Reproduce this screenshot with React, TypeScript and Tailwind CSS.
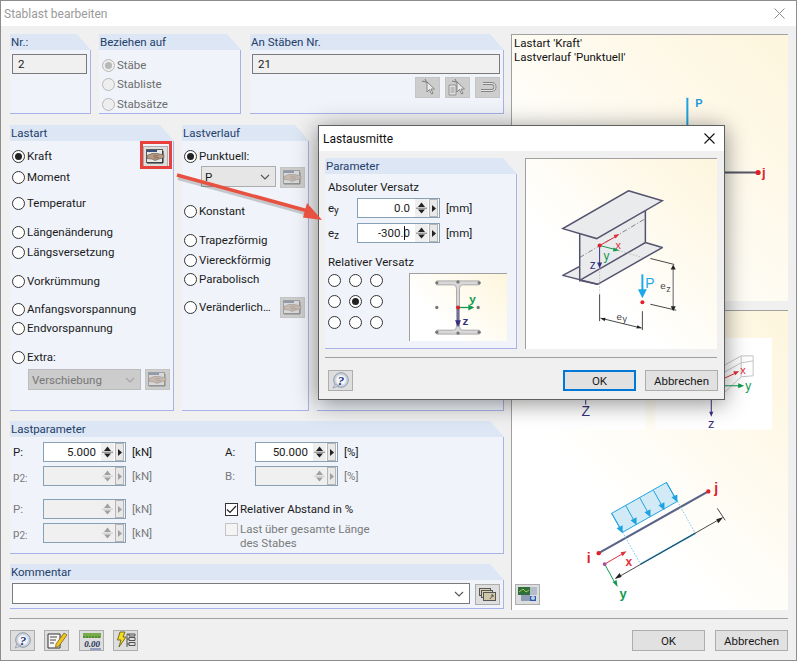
import React from "react";

type P = { children?: React.ReactNode; className?: string };

function Group({ title, className = "", children, titleClass = "" }: P & { title: string; titleClass?: string }) {
  return (
    <div className={`flex flex-col ${className}`}>
      <div className={`h-[16px] shrink-0 bg-[#dce6f4] pl-[1px] leading-[17px] text-[#23406b] [clip-path:polygon(0_0,calc(100%-14px)_0,100%_100%,0_100%)] ${titleClass}`}>
        {title}
      </div>
      <div className="flex min-h-0 flex-1 flex-col border-b border-r border-[#a8b2e8] bg-[#f0f4fa]">{children}</div>
    </div>
  );
}

function Radio({ checked = false, disabled = false, className = "" }: { checked?: boolean; disabled?: boolean; className?: string }) {
  return (
    <span className={`flex h-[13px] w-[13px] shrink-0 items-center justify-center rounded-full border ${disabled ? "border-[#b8b8b8] bg-[#eeeeee]" : "border-[#333333] bg-white"} ${className}`}>
      {checked && <span className={`h-[7px] w-[7px] rounded-full ${disabled ? "bg-[#b8b8b8]" : "bg-[#222222]"}`} />}
    </span>
  );
}

function RadioRow({ label, checked, disabled, className = "" }: { label: string; checked?: boolean; disabled?: boolean; className?: string }) {
  return (
    <div className={`flex h-[18px] items-center ${disabled ? "text-[#6d6d6d]" : "text-[#1a1a1a]"} ${className}`}>
      <Radio checked={checked} disabled={disabled} />
      <span className="ml-[2px] whitespace-nowrap">{label}</span>
    </div>
  );
}

function Btn({ children, className = "", dim = false }: P & { dim?: boolean }) {
  return (
    <div className={`flex h-[21px] w-[25px] shrink-0 items-center justify-center border ${dim ? "border-[#c4c4c4] bg-[#cdcdcd]" : "border-[#adadad] bg-[#dedede]"} ${className}`}>
      {children}
    </div>
  );
}

function HandIcon({ dim = false }: { dim?: boolean }) {
  return (
    <svg width="19" height="15" viewBox="0 0 19 15" className={dim ? "opacity-40" : ""}>
      <rect x="0.5" y="0.5" width="16" height="13" fill="#e9e9e9" stroke="#5a5a5a" />
      <path d="M1 14 H17 V2" fill="none" stroke="#222222" strokeWidth="1" />
      <rect x="1" y="1" width="10" height="2" fill="#35527f" />
      <path d="M1 6.5 L6 4.5 L11 4.5 L18 6 L18 8.5 L13 10 L9 11.5 L6 10 L1 9.5 Z" fill="#b89a84" stroke="#5e4a3e" strokeWidth="0.6" />
      <path d="M7 7 L12 6.5 M8 9 L13 8.5" stroke="#5e4a3e" strokeWidth="0.6" />
    </svg>
  );
}

function Chevron({ color = "#555555" }: { color?: string }) {
  return (
    <svg width="10" height="6" viewBox="0 0 10 6">
      <path d="M1 1 L5 5 L9 1" fill="none" stroke={color} strokeWidth="1.1" />
    </svg>
  );
}

function Select({ value, className = "", disabled = false }: { value: string; className?: string; disabled?: boolean }) {
  return (
    <div className={`flex h-[21px] items-center justify-between border pl-[3px] pr-[5px] ${disabled ? "border-[#bcbcbc] bg-[#cccccc] text-[#777777]" : "border-[#adadad] bg-[#e6e6e6] text-[#1a1a1a]"} ${className}`}>
      <span>{value}</span>
      <Chevron color={disabled ? "#a5a5a5" : "#555555"} />
    </div>
  );
}

function Spin({ value, disabled = false, className = "" }: { value?: React.ReactNode; disabled?: boolean; className?: string }) {
  const col = disabled ? "#a0a0a0" : "#222222";
  return (
    <div className={`flex h-[20px] w-[83px] shrink-0 items-center border border-[#86a0b8] ${disabled ? "bg-[#f0f0f0]" : "bg-white"} ${className}`}>
      <div className="flex-1 pr-[5px] text-right text-[#1a1a1a]">{value}</div>
      <svg width="13" height="18" viewBox="0 0 13 18" className="shrink-0">
        <rect width="13" height="18" fill="#efefef" />
        <path d="M6.5 3.5 L10 8 L3 8 Z" fill={col} />
        <path d="M6.5 14.5 L10 10.5 L3 10.5 Z" fill={col} />
        <path d="M1 9.2 H12" stroke={disabled ? "#c8c8c8" : "#777777"} />
      </svg>
      <div className="ml-[1px] mr-[1px] flex h-[18px] w-[9px] shrink-0 items-center justify-center border border-[#b5b5b5] bg-[#e8e8e8]">
        <svg width="4" height="7" viewBox="0 0 4 7"><path d="M0 0 L4 3.5 L0 7 Z" fill={col} /></svg>
      </div>
    </div>
  );
}

function FieldRow({ label, value, unit, disabled = false, labelClass = "", className = "" }: { label: React.ReactNode; value?: string; unit: string; disabled?: boolean; labelClass?: string; className?: string }) {
  return (
    <div className={`flex h-[20px] items-center ${className}`}>
      <span className={`w-[30px] shrink-0 ${disabled ? "text-[#7a7a7a]" : "text-[#1a1a1a]"} ${labelClass}`}>{label}</span>
      <Spin value={value} disabled={disabled} />
      <span className={`ml-[6px] ${disabled ? "text-[#7a7a7a]" : "text-[#1a1a1a]"}`}>{unit}</span>
    </div>
  );
}

function Sub({ a, b }: { a: string; b: string }) {
  return (
    <span>
      {a}
      <span className="relative top-[2px] text-[10px]">{b}</span>
    </span>
  );
}

function HelpIcon() {
  return (
    <svg width="19" height="17" viewBox="0 0 19 17">
      <circle cx="10" cy="8" r="7.3" fill="#d0d5e0" stroke="#8f98aa" />
      <path d="M4 12 L2 16 L8 14 Z" fill="#d0d5e0" stroke="#8f98aa" strokeWidth="0.7" />
      <circle cx="10" cy="8" r="4.8" fill="#f4f6fa" />
      <text x="10" y="12.5" textAnchor="middle" fontSize="13" fontWeight="700" fontStyle="italic" fill="#24407c" fontFamily="Liberation Serif">?</text>
    </svg>
  );
}

function NoteIcon() {
  return (
    <svg width="20" height="19" viewBox="0 0 20 19">
      <path d="M1 3 H13 V17 H1 Z" fill="#f7f7f7" stroke="#333333" />
      <path d="M3 6 H10 M3 9 H9 M3 12 H7" stroke="#444444" />
      <path d="M9 13 L17 2 L20 4 L12 15 L8.5 16.5 Z" fill="#f2c51e" stroke="#6a5510" strokeWidth="0.7" />
    </svg>
  );
}

function ValueIcon() {
  return (
    <svg width="20" height="18" viewBox="0 0 20 18">
      <rect x="1" y="1" width="18" height="5" fill="#74ad4a" />
      <path d="M2 4 V6 M5 4 V6 M8 4 V6 M11 4 V6 M14 4 V6 M17 4 V6" stroke="#3e6d22" />
      <text x="10" y="15" textAnchor="middle" fontSize="9" fontWeight="700" fontStyle="italic" fill="#222f55" fontFamily="Liberation Serif">0.00</text>
      <path d="M8 17 H19" stroke="#4a5fa5" />
    </svg>
  );
}

function BoltIcon() {
  return (
    <svg width="20" height="19" viewBox="0 0 20 19">
      <path d="M4 1 H9 L7 6 H10 L3 16 L5 9 H1.5 Z" fill="#f4dc1e" stroke="#5c5410" strokeWidth="0.8" />
      <path d="M11 3 V16 M11 3 H19 M13 3 V5 H19 V3 M11 8 H13 V6.5 H19 V9.5 H13 V8 M11 13 H13 V11.5 H19 V14.5 H13 V13" fill="none" stroke="#444444" strokeWidth="0.9" />
    </svg>
  );
}

function PickIcon({ doc = false, back = false }: { doc?: boolean; back?: boolean }) {
  if (back) {
    return (
      <svg width="19" height="13" viewBox="0 0 19 13" className="opacity-60">
        <path d="M5 2.5 H13.5 A3.5 3.5 0 0 1 13.5 9.5 H3" fill="none" stroke="#555555" strokeWidth="3" />
        <path d="M5 2.5 H13.5 A3.5 3.5 0 0 1 13.5 9.5 H3" fill="none" stroke="#f4f4f4" strokeWidth="1.2" />
      </svg>
    );
  }
  return (
    <svg width="20" height="17" viewBox="0 0 20 17" className="opacity-60">
      {doc && <path d="M1 6 H8 V16 H1 Z M2.5 9 H6.5 M2.5 11 H6.5 M2.5 13 H6.5" fill="#eeeeee" stroke="#555555" strokeWidth="0.8" />}
      <path d="M7 0 L9 4 M4 2 L8 3" stroke="#444444" />
      <path d="M9 3 L9 13 L11.5 10.5 L13.5 15 L15 14.3 L13 10 L16.5 10 Z" fill="#ffffff" stroke="#333333" strokeWidth="0.8" />
    </svg>
  );
}

function StackIcon() {
  return (
    <svg width="17" height="13" viewBox="0 0 17 13">
      <rect x="0.5" y="0.5" width="11" height="7" fill="#d9d1b4" stroke="#555555" />
      <rect x="2.5" y="2.5" width="11" height="7" fill="#d9d1b4" stroke="#555555" />
      <rect x="4.5" y="4.5" width="12" height="8" fill="#cfc7a6" stroke="#555555" />
      <path d="M11 11 L14 7 M14 7 H12 M14 7 V9" stroke="#555555" />
    </svg>
  );
}

function ViewIcon() {
  return (
    <svg width="20" height="17" viewBox="0 0 20 17">
      <rect x="0" y="1" width="12" height="8" fill="#2f6d3a" />
      <path d="M1 6 L5 3 L8 6 L11 4" fill="none" stroke="#9ad04a" />
      <rect x="12" y="1" width="7" height="8" fill="#b5bcc9" />
      <rect x="3" y="9" width="9" height="6" fill="#8f9bb4" />
      <path d="M12 10 H18 V15 H12 Z" fill="#2b5aa8" />
      <circle cx="15" cy="12" r="2" fill="#bcd0ee" />
    </svg>
  );
}

function BeamPicture() {
  const dark = "#55526f";
  return (
    <svg viewBox="0 0 192 191" className="absolute inset-0 h-full w-full">
      <path d="M54 75 L120 52 V84 L54 122 Z" fill="#e9ebec" stroke={dark} strokeWidth="1.5" />
      <path d="M120 84 L137 89 L72 126 L37 117 L54 108" fill="#e9ebec" stroke={dark} strokeWidth="1.5" strokeLinejoin="round" />
      <path d="M54 108 V122 L72 126 M54 122 L120 84" fill="none" stroke={dark} strokeWidth="1.5" />
      <path d="M103 32 L137 42 L71 80 L37 70 Z" fill="#e9ebec" stroke={dark} strokeWidth="1.5" />
      <path d="M54 99 L120 60" stroke="#555555" strokeWidth="0.7" strokeDasharray="5 2 1 2" />
      <path d="M74 110 V135 M93 92 L117 99" stroke="#aaaaaa" strokeWidth="0.7" strokeDasharray="1.5 1.5" />
      <path d="M74 87 L92 77" stroke="#e0303a" />
      <path d="M94 75.5 L88 76.5 L90 80 Z" fill="#e0303a" />
      <path d="M74 87 L90 91" stroke="#1a9a50" />
      <path d="M94 92 L88 89 L87.5 93 Z" fill="#1a9a50" />
      <path d="M74 87 V105" stroke="#35307e" />
      <path d="M74 110 L71.5 104 H76.5 Z" fill="#35307e" />
      <circle cx="74" cy="87" r="2" fill="#e0202a" />
      <text x="90" y="90" fontSize="11" fill="#e0303a" fontFamily="Liberation Sans">x</text>
      <text x="78" y="102" fontSize="12" fill="#1a9a50" fontFamily="Liberation Sans">y</text>
      <text x="64" y="111" fontSize="12" fill="#35307e" fontFamily="Liberation Sans">z</text>
      <path d="M74 136 V163 M117 153 V172 M75 160 L116 170" stroke="#333333" strokeWidth="0.9" />
      <path d="M75 160 L80 159.5 L79 163 Z M116.5 170 L111 170.5 L112 167 Z" fill="#222222" />
      <text x="91" y="162" fontSize="10" fill="#444444" fontFamily="Liberation Sans">e</text>
      <text x="97" y="164" fontSize="9" fill="#444444" fontFamily="Liberation Sans">y</text>
      <path d="M117 116 V134" stroke="#1ea8ea" strokeWidth="2" />
      <path d="M112.5 131 H121.5 L117 140 Z" fill="#1ea8ea" />
      <circle cx="117" cy="144" r="2" fill="#e0202a" />
      <text x="120" y="130" fontSize="14" fill="#1ea8ea" fontFamily="Liberation Sans">P</text>
      <path d="M125 100 L149 106 M125 146 L151 152" stroke="#333333" strokeWidth="0.9" />
      <path d="M148 108 V150" stroke="#999999" strokeWidth="1.6" />
      <path d="M148 106 L145.5 111 H150.5 Z M148 153 L145.5 148 H150.5 Z" fill="#222222" />
      <text x="135" y="131" fontSize="10" fill="#444444" fontFamily="Liberation Sans">e</text>
      <text x="141" y="134" fontSize="9" fill="#444444" fontFamily="Liberation Sans">z</text>
    </svg>
  );
}

function SmallSection() {
  const g = "#a9a9a9";
  return (
    <svg viewBox="0 0 98 68" className="absolute inset-0 h-full w-full">
      <path d="M27 7 H70 V11 H53 Q50 11 50 15 V53 Q50 57 53 57 H70 V61 H27 V57 H44 Q47 57 47 53 V15 Q47 11 44 11 H27 Z" fill="#d8d8d8" stroke={g} strokeWidth="1" />
      <g fill="#777777">
        <circle cx="27" cy="9" r="1.7" /><circle cx="48.5" cy="8" r="1.7" /><circle cx="70" cy="9" r="1.7" />
        <circle cx="27" cy="34" r="1.7" /><circle cx="69" cy="34" r="1.7" />
        <circle cx="27" cy="59" r="1.7" /><circle cx="48.5" cy="60" r="1.7" /><circle cx="70" cy="59" r="1.7" />
      </g>
      <path d="M49 34 H60" stroke="#109a50" strokeWidth="1.3" />
      <path d="M65 34 L59 31 V37 Z" fill="#109a50" />
      <path d="M48.5 34 V49" stroke="#35307e" strokeWidth="1.3" />
      <path d="M48.5 54 L45.5 47 H51.5 Z" fill="#35307e" />
      <circle cx="48.5" cy="34" r="2" fill="#e0202a" />
      <text x="60" y="29" fontSize="12" fontWeight="700" fill="#109a50" fontFamily="Liberation Sans">y</text>
      <text x="53" y="52" fontSize="12" fontWeight="700" fill="#35307e" fontFamily="Liberation Sans">z</text>
    </svg>
  );
}

function UpperPicture() {
  return (
    <svg viewBox="0 0 277 267" className="absolute inset-0 h-full w-full">
      <path d="M100 138 H247" stroke="#555566" strokeWidth="2" />
      <path d="M176 63 V138" stroke="#1ea3e0" strokeWidth="2" />
      <circle cx="247" cy="138" r="2.6" fill="#e0202a" />
      <text x="184" y="72" fontSize="11" fontWeight="700" fill="#1e9bd8" fontFamily="Liberation Sans">P</text>
      <text x="251" y="143" fontSize="13" fontWeight="700" fill="#e0202a" fontFamily="Liberation Sans">j</text>
    </svg>
  );
}

function LowerPicture() {
  const blue = "#1ea3e0";
  const arrows: [number, number][] = [[100, 203], [114, 195], [128, 187], [142, 180], [155, 172]];
  return (
    <svg viewBox="0 0 277 300" className="absolute inset-0 h-full w-full">
      <rect x="17" y="27" width="117" height="92" fill="#ffffff" />
      <rect x="144" y="27" width="117" height="92" fill="#ffffff" />
      <path d="M74 85 V94" stroke="#35307e" />
      <text x="74" y="105" textAnchor="middle" fontSize="14" fill="#35307e" fontFamily="Liberation Sans">Z</text>
      <path d="M200 88 V103" stroke="#35307e" />
      <path d="M200 106 L198 101 H202 Z" fill="#35307e" />
      <text x="200" y="117" textAnchor="middle" fontSize="13" fill="#35307e" fontFamily="Liberation Sans">z</text>
      <path d="M212 55 L230 45 H242 V65 L230 66 L212 83 M230 45 V66 M212 62 L230 52 L242 50" fill="none" stroke="#c4c4c4" />
      <path d="M212 68 L225 62" stroke="#e0303a" />
      <path d="M228 60.5 L222 60.5 L224 64.5 Z" fill="#e0303a" />
      <path d="M212 75 L230 75" stroke="#109a50" />
      <path d="M233 75 L227 72.5 V77.5 Z" fill="#109a50" />
      <text x="229" y="63" fontSize="11" fill="#e0303a" fontFamily="Liberation Sans">x</text>
      <text x="234" y="79" fontSize="12" fill="#109a50" fontFamily="Liberation Sans">y</text>

      <path d="M100 203 L155 172 L166 191 L111 222 Z" fill="#d2eaf6" stroke={blue} strokeWidth="1" />
      {arrows.map(([x, y], i) => (
        <g key={i}>
          <path d={`M${x} ${y} L${x + 10} ${y + 18}`} stroke={blue} />
          <path d={`M${x + 11} ${y + 20} L${x + 5} ${y + 15} L${x + 11} ${y + 12} Z`} fill={blue} />
        </g>
      ))}
      <path d="M87 243 L197 181" stroke="#5a6488" strokeWidth="2.2" />
      <circle cx="87" cy="243" r="2.2" fill="#e0202a" />
      <circle cx="197" cy="181" r="2.2" fill="#e0202a" />
      <text x="75" y="253" fontSize="14" fontWeight="700" fill="#e0202a" fontFamily="Liberation Sans">i</text>
      <text x="203" y="183" fontSize="14" fontWeight="700" fill="#e0202a" fontFamily="Liberation Sans">j</text>
      <path d="M111 222 L129 254 M166 191 L184 223" stroke="#5ab8e6" strokeWidth="0.8" strokeDasharray="1.5 1.5" />
      <path d="M129 254 L184 223" stroke={blue} strokeWidth="1.6" />
      <path d="M105 268 L210 208 M206 198 L214 210" stroke="#333333" strokeWidth="0.9" />
      <path d="M103 269 L108 263 L110 267 Z M212 207 L207 213 L205 209 Z" fill="#222222" />
      <path d="M93 254 L112 243" stroke="#e0303a" />
      <path d="M115 241 L109 242 L111 246 Z" fill="#e0303a" />
      <path d="M93 254 L104 274" stroke="#109a50" />
      <path d="M106 277 L101 272 L105 270 Z" fill="#109a50" />
      <circle cx="93" cy="254" r="2" fill="#b04a9a" />
      <text x="114" y="256" fontSize="12" fontWeight="700" fill="#e0303a" fontFamily="Liberation Sans">x</text>
      <text x="108" y="288" fontSize="13" fontWeight="700" fill="#109a50" fontFamily="Liberation Sans">y</text>
    </svg>
  );
}

function Dialog() {
  return (
    <div className="absolute left-[317px] top-[124px] z-10 flex h-[275px] w-[407px] flex-col border border-[#5f5f5f] bg-[#f0f0f0] shadow-[0_3px_22px_rgba(0,0,0,0.45)]">
      <div className="flex h-[25px] shrink-0 items-center justify-between bg-white pl-[4px] pr-[9px] text-[12px] text-[#111111]">
        <span>Lastausmitte</span>
        <svg width="11" height="11" viewBox="0 0 11 11"><path d="M0.5 0.5 L10.5 10.5 M10.5 0.5 L0.5 10.5" stroke="#111111" strokeWidth="1.1" /></svg>
      </div>
      <div className="ml-[6px] mt-[7px] flex h-[191px] shrink-0 gap-[8px]">
        <Group title="Parameter" className="h-full w-[192px]">
          <div className="ml-[3px] mt-[5px] h-[16px] leading-[16px] text-[#1a1a1a]">Absoluter Versatz</div>
          <div className="ml-[3px] mt-[3px] flex h-[20px] items-center">
            <span className="w-[29px] text-[#1a1a1a]"><Sub a="e" b="y" /></span>
            <Spin value="0.0" />
            <span className="ml-[6px] text-[#1a1a1a]">[mm]</span>
          </div>
          <div className="ml-[3px] mt-[5px] flex h-[20px] items-center">
            <span className="w-[29px] text-[#1a1a1a]"><Sub a="e" b="z" /></span>
            <div className="relative">
              <Spin value="-300.0" />
              <span className="absolute left-[47px] top-[3px] h-[14px] w-[1px] bg-[#111111]" />
            </div>
            <span className="ml-[6px] text-[#1a1a1a]">[mm]</span>
          </div>
          <div className="ml-[3px] mt-[11px] h-[16px] leading-[16px] text-[#1a1a1a]">Relativer Versatz</div>
          <div className="ml-[3px] mt-[3px] flex">
            <div className="grid grid-cols-[13px_13px_13px] content-start gap-x-[8px] gap-y-[8px] pt-[1px]">
              <Radio /><Radio /><Radio />
              <Radio /><Radio checked /><Radio />
              <Radio /><Radio /><Radio />
            </div>
            <div className="relative ml-[26px] h-[68px] w-[98px] border-l border-t border-[#a0a0a0] bg-[linear-gradient(45deg,#ffffff_30%,#fdf5dc)]">
              <SmallSection />
            </div>
          </div>
        </Group>
        <div className="relative h-full w-[192px] border-l border-t border-[#a0a0a0] bg-[linear-gradient(45deg,#ffffff_35%,#fdf5dc)]">
          <BeamPicture />
        </div>
      </div>
      <div className="ml-[6px] mt-[8px] w-[392px] border-t border-[#a0a0a0]" />
      <div className="mt-[12px] flex items-center justify-between pl-[9px] pr-[6px]">
        <Btn className="h-[20px]"><HelpIcon /></Btn>
        <div className="flex gap-[9px] text-[#1a1a1a]">
          <div className="flex h-[21px] w-[73px] items-center justify-center border-2 border-[#0078d7] bg-[#e1e1e1]">OK</div>
          <div className="flex h-[21px] w-[73px] items-center justify-center border border-[#adadad] bg-[#e1e1e1]">Abbrechen</div>
        </div>
      </div>
    </div>
  );
}

export default function App() {
  return (
    <div className="relative flex h-[661px] w-[797px] flex-col overflow-hidden border border-[#8d8d8d] bg-[#f0f0f0] font-['Roboto','Liberation_Sans',sans-serif] text-[11.5px] leading-[16px]">
      <div className="flex h-[25px] shrink-0 items-center justify-between bg-white pl-[3px] pr-[11px]">
        <span className="text-[12px] text-[#9a9a9a]">Stablast bearbeiten</span>
        <svg width="11" height="11" viewBox="0 0 11 11"><path d="M0.5 0.5 L10.5 10.5 M10.5 0.5 L0.5 10.5" stroke="#8a8a8a" strokeWidth="1" /></svg>
      </div>

      <div className="flex shrink-0 gap-[7px] pl-[9px] pt-[8px]">
        <div className="flex w-[494px] flex-col">
          <div className="flex h-[80px] gap-[8px]">
            <Group title="Nr.:" className="w-[81px]">
              <div className="ml-[2px] mt-[4px] flex h-[20px] w-[75px] items-center border border-[#7a7a7a] bg-[#f0f0f0] pl-[5px] text-[#1a1a1a]">2</div>
            </Group>
            <Group title="Beziehen auf" className="w-[142px]">
              <RadioRow label="Stäbe" checked disabled className="ml-[3px] mt-[6px]" />
              <RadioRow label="Stabliste" disabled className="ml-[3px] mt-[1px]" />
              <RadioRow label="Stabsätze" disabled className="ml-[3px] mt-[2px]" />
            </Group>
            <Group title="An Stäben Nr." className="ml-[1px] w-[254px]">
              <div className="ml-[2px] mt-[4px] flex h-[20px] w-[248px] items-center border border-[#7a7a7a] bg-[#f0f0f0] pl-[5px] text-[#1a1a1a]">21</div>
              <div className="mr-[3px] mt-[3px] flex justify-end gap-[5px]">
                <Btn dim><PickIcon /></Btn>
                <Btn dim><PickIcon doc /></Btn>
                <Btn dim><PickIcon back /></Btn>
              </div>
            </Group>
          </div>

          <div className="mt-[11px] flex h-[286px] gap-[8px]">
            <Group title="Lastart" className="w-[164px]">
              <div className="relative ml-[2px] mr-[5px] mt-[6px] flex h-[18px] items-center justify-between">
                <div className="flex items-center text-[#1a1a1a]">
                  <Radio checked />
                  <span className="ml-[2px]">Kraft</span>
                </div>
                <Btn className="h-[19px] w-[23px]"><HandIcon /></Btn>
                <div className="absolute right-[-4px] top-[-6px] h-[28px] w-[32px] border-[3px] border-[#e8403a]" />
              </div>
              <RadioRow label="Moment" className="ml-[2px] mt-[3px]" />
              <RadioRow label="Temperatur" className="ml-[2px] mt-[8px]" />
              <RadioRow label="Längenänderung" className="ml-[2px] mt-[11px]" />
              <RadioRow label="Längsversetzung" className="ml-[2px] mt-[2px]" />
              <RadioRow label="Vorkrümmung" className="ml-[2px] mt-[11px]" />
              <RadioRow label="Anfangsvorspannung" className="ml-[2px] mt-[10px]" />
              <RadioRow label="Endvorspannung" className="ml-[2px] mt-[1px]" />
              <RadioRow label="Extra:" className="ml-[2px] mt-[11px]" />
              <div className="ml-[18px] mt-[3px] flex items-start gap-[4px]">
                <Select value="Verschiebung" disabled className="w-[113px]" />
                <Btn dim><HandIcon dim /></Btn>
              </div>
            </Group>
            <Group title="Lastverlauf" className="w-[127px]">
              <RadioRow label="Punktuell:" checked className="ml-[2px] mt-[6px]" />
              <div className="ml-[19px] mt-[1px] flex items-start gap-[4px]">
                <Select value="P" className="w-[75px]" />
                <Btn dim className="mt-[1px]"><HandIcon dim /></Btn>
              </div>
              <RadioRow label="Konstant" className="ml-[2px] mt-[14px]" />
              <RadioRow label="Trapezförmig" className="ml-[2px] mt-[11px]" />
              <RadioRow label="Viereckförmig" className="ml-[2px] mt-[2px]" />
              <RadioRow label="Parabolisch" className="ml-[2px] mt-[1px]" />
              <div className="ml-[2px] mr-[3px] mt-[10px] flex h-[18px] items-center justify-between text-[#1a1a1a]">
                <div className="flex items-center">
                  <Radio />
                  <span className="ml-[2px]">Veränderlich…</span>
                </div>
                <Btn dim><HandIcon dim /></Btn>
              </div>
            </Group>
            <Group title="" className="w-[187px]" />
          </div>

          <Group title="Lastparameter" className="mt-[10px] h-[133px]">
            <div className="flex">
              <div className="w-[215px] pl-[3px]">
                <FieldRow label="P:" value="5.000" unit="[kN]" className="mt-[5px]" />
                <FieldRow label={<Sub a="p" b="2:" />} unit="[kN]" disabled className="mt-[4px]" />
                <FieldRow label="P:" unit="[kN]" disabled className="mt-[13px]" />
                <FieldRow label={<Sub a="p" b="2:" />} unit="[kN]" disabled className="mt-[4px]" />
              </div>
              <div className="flex-1">
                <FieldRow label="A:" value="50.000" unit="[%]" className="mt-[5px]" />
                <FieldRow label="B:" unit="[%]" disabled className="mt-[4px]" />
                <div className="mt-[13px] flex h-[20px] items-center text-[#1a1a1a]">
                  <span className="flex h-[13px] w-[13px] items-center justify-center border border-[#333333] bg-white">
                    <svg width="11" height="9" viewBox="0 0 11 9"><path d="M1 4.5 L4 7.5 L10 1" fill="none" stroke="#222222" strokeWidth="1.2" /></svg>
                  </span>
                  <span className="ml-[2px]">Relativer Abstand in %</span>
                </div>
                <div className="mt-[4px] flex items-start text-[#7a7a7a]">
                  <span className="h-[13px] w-[13px] shrink-0 border border-[#c4c4c4] bg-[#f4f4f4]" />
                  <span className="ml-[2px] -mt-[1px] leading-[14px]">Last über gesamte Länge<br />des Stabes</span>
                </div>
              </div>
            </div>
          </Group>

          <Group title="Kommentar" className="mt-[10px] h-[45px]">
            <div className="ml-[2px] mt-[3px] flex items-start gap-[5px]">
              <div className="flex h-[21px] w-[458px] items-center justify-end border border-[#7a7a7a] bg-white pr-[5px]">
                <Chevron />
              </div>
              <Btn className="mt-[1px]"><StackIcon /></Btn>
            </div>
          </Group>
        </div>

        <div className="flex w-[277px] flex-col">
          <div className="relative h-[267px] border-l border-t border-[#a0a0a0] bg-[linear-gradient(45deg,#ffffff_20%,#fdf5dc)] pl-[2px] pt-[1px] text-[#111111]">
            <UpperPicture />
            <div className="relative leading-[14px]">Lastart 'Kraft'</div>
            <div className="relative leading-[14px]">Lastverlauf 'Punktuell'</div>
          </div>
          <div className="relative mt-[9px] flex h-[300px] flex-col border-l border-t border-[#a0a0a0] bg-[linear-gradient(45deg,#ffffff_35%,#fdf5dc)]">
            <LowerPicture />
            <Btn className="relative ml-[3px] mt-auto mb-[5px]"><ViewIcon /></Btn>
          </div>
        </div>
      </div>

      <div className="ml-[8px] mt-[8px] w-[779px] border-t border-[#a0a0a0]" />
      <div className="mt-[11px] flex items-center justify-between pl-[9px] pr-[8px]">
        <div className="flex gap-[9px]">
          <Btn><HelpIcon /></Btn>
          <Btn><NoteIcon /></Btn>
          <Btn className="ml-[1px]"><ValueIcon /></Btn>
          <Btn><BoltIcon /></Btn>
        </div>
        <div className="flex gap-[10px] text-[#1a1a1a]">
          <div className="flex h-[21px] w-[73px] items-center justify-center border border-[#adadad] bg-[#e1e1e1]">OK</div>
          <div className="flex h-[21px] w-[73px] items-center justify-center border border-[#adadad] bg-[#e1e1e1]">Abbrechen</div>
        </div>
      </div>

      <Dialog />

      <svg viewBox="0 0 797 661" className="pointer-events-none absolute left-[-1px] top-[-1px] z-20 h-[661px] w-[797px]">
        <path d="M177 175 L308 211" stroke="rgba(0,0,0,0.18)" strokeWidth="4" transform="translate(1 3)" />
        <path d="M177 175 L308 211" stroke="#e8503f" strokeWidth="3.5" />
        <path d="M322 220 L303 217.5 L307 203 Z" fill="#e8503f" />
      </svg>
    </div>
  );
}
